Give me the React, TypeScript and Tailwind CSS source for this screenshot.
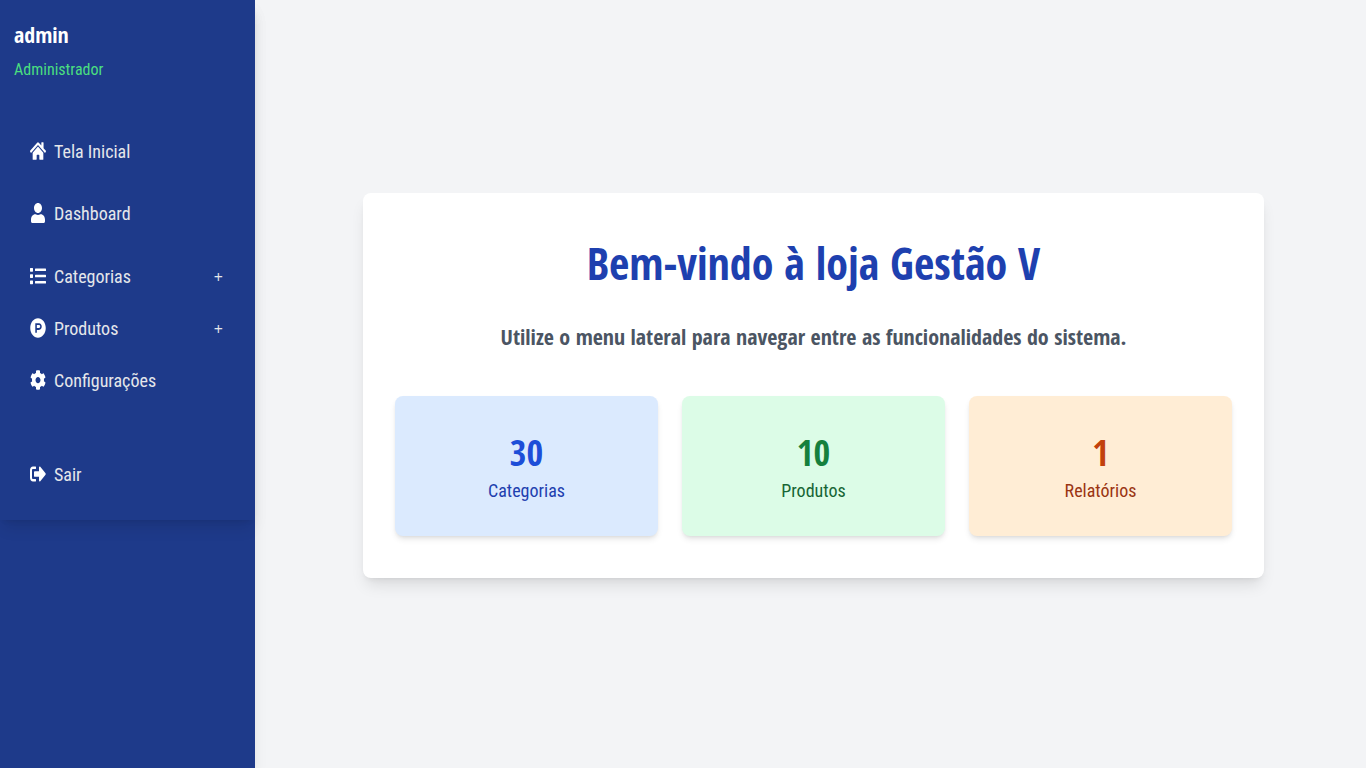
import type { ReactNode } from 'react';
import { FaCog, FaHome, FaList, FaProductHunt, FaSignOutAlt, FaUser } from 'react-icons/fa';

type NavItem = {
  label: string;
  icon: ReactNode;
  className: string;
  expandable?: boolean;
};

const navItems: NavItem[] = [
  { label: 'Tela Inicial', icon: <FaHome preserveAspectRatio="none" className="h-5 w-4" />, className: 'mb-[22px]' },
  { label: 'Dashboard', icon: <FaUser preserveAspectRatio="none" className="h-5 w-[14px]" />, className: 'mb-[23px]' },
  { label: 'Categorias', icon: <FaList preserveAspectRatio="none" className="h-5 w-4" />, className: 'mb-3', expandable: true },
  { label: 'Produtos', icon: <FaProductHunt preserveAspectRatio="none" className="h-5 w-4" />, className: 'mb-3', expandable: true },
  { label: 'Configurações', icon: <FaCog preserveAspectRatio="none" className="h-5 w-4" />, className: 'mb-[54px]' },
  { label: 'Sair', icon: <FaSignOutAlt preserveAspectRatio="none" className="h-5 w-4" />, className: '' },
];

const stats = [
  { value: 30, label: 'Categorias', card: 'bg-[#dbeafe]', number: 'text-[#1d4ed8]', text: 'text-[#1e40af]' },
  { value: 10, label: 'Produtos', card: 'bg-[#dcfce7]', number: 'text-[#15803d]', text: 'text-[#166534]' },
  { value: 1, label: 'Relatórios', card: 'bg-[#ffedd5]', number: 'text-[#c2410c]', text: 'text-[#9a3412]' },
];

function NavRow({ item }: { item: NavItem }) {
  const content = (
    <>
      <span className="flex w-4 shrink-0 justify-center pb-0.5">{item.icon}</span>
      <span className="flex-1 text-left">{item.label}</span>
      {item.expandable && <span className="font-['Open_Sans',sans-serif] text-base">+</span>}
    </>
  );
  const row = 'flex h-10 w-full items-center gap-2 pr-8 pl-[30px] text-lg text-[#e5e7eb]';
  return (
    <li className={item.className}>
      {item.expandable ? (
        <button type="button" aria-expanded="false" className={row}>{content}</button>
      ) : (
        <a href="#" className={row}>{content}</a>
      )}
    </li>
  );
}

export default function App() {
  return (
    <div className="flex min-h-screen bg-[#f3f4f6] font-['Roboto_Condensed','Open_Sans',sans-serif]">
      <aside className="w-[255px] shrink-0 bg-[#1e3a8a] shadow-lg">
        <div className="pb-[25px] shadow-lg">
          <header className="px-[14px] pt-[19px]">
            <h2 className="font-['Open_Sans_Condensed','Open_Sans',sans-serif] text-[22px] leading-[30px] font-bold text-white">admin</h2>
            <p className="pt-[9px] text-base leading-6 text-[#4ade80]">Administrador</p>
          </header>
          <nav className="pt-[50px]">
            <ul className="[&_svg]:text-white">
              {navItems.map((item) => (
                <NavRow key={item.label} item={item} />
              ))}
            </ul>
          </nav>
        </div>
      </aside>

      <main className="flex min-w-0 flex-1 items-center justify-center pt-[3px] pl-1.5">
        <section className="w-full max-w-[901px] rounded-lg bg-white px-8 pt-[39px] pb-[42px] text-center shadow-lg">
          <h1 className="font-['Open_Sans_Condensed','Open_Sans',sans-serif] text-[44px] leading-[62px] font-bold text-[#1e40af]">Bem-vindo à loja Gestão V</h1>
          <p className="pt-[26px] font-['Open_Sans_Condensed','Open_Sans',sans-serif] text-[22px] leading-8 font-semibold text-[#4b5563]">
            Utilize o menu lateral para navegar entre as funcionalidades do sistema.
          </p>
          <div className="mt-11 grid grid-cols-3 gap-6">
            {stats.map((stat) => (
              <div key={stat.label} className={`rounded-lg pt-[35px] pb-[31px] shadow-md ${stat.card}`}>
                <p className={`font-['Open_Sans_Condensed','Open_Sans',sans-serif] text-4xl leading-[44px] font-bold ${stat.number}`}>{stat.value}</p>
                <p className={`pt-0.5 text-lg leading-7 ${stat.text}`}>{stat.label}</p>
              </div>
            ))}
          </div>
        </section>
      </main>
    </div>
  );
}
